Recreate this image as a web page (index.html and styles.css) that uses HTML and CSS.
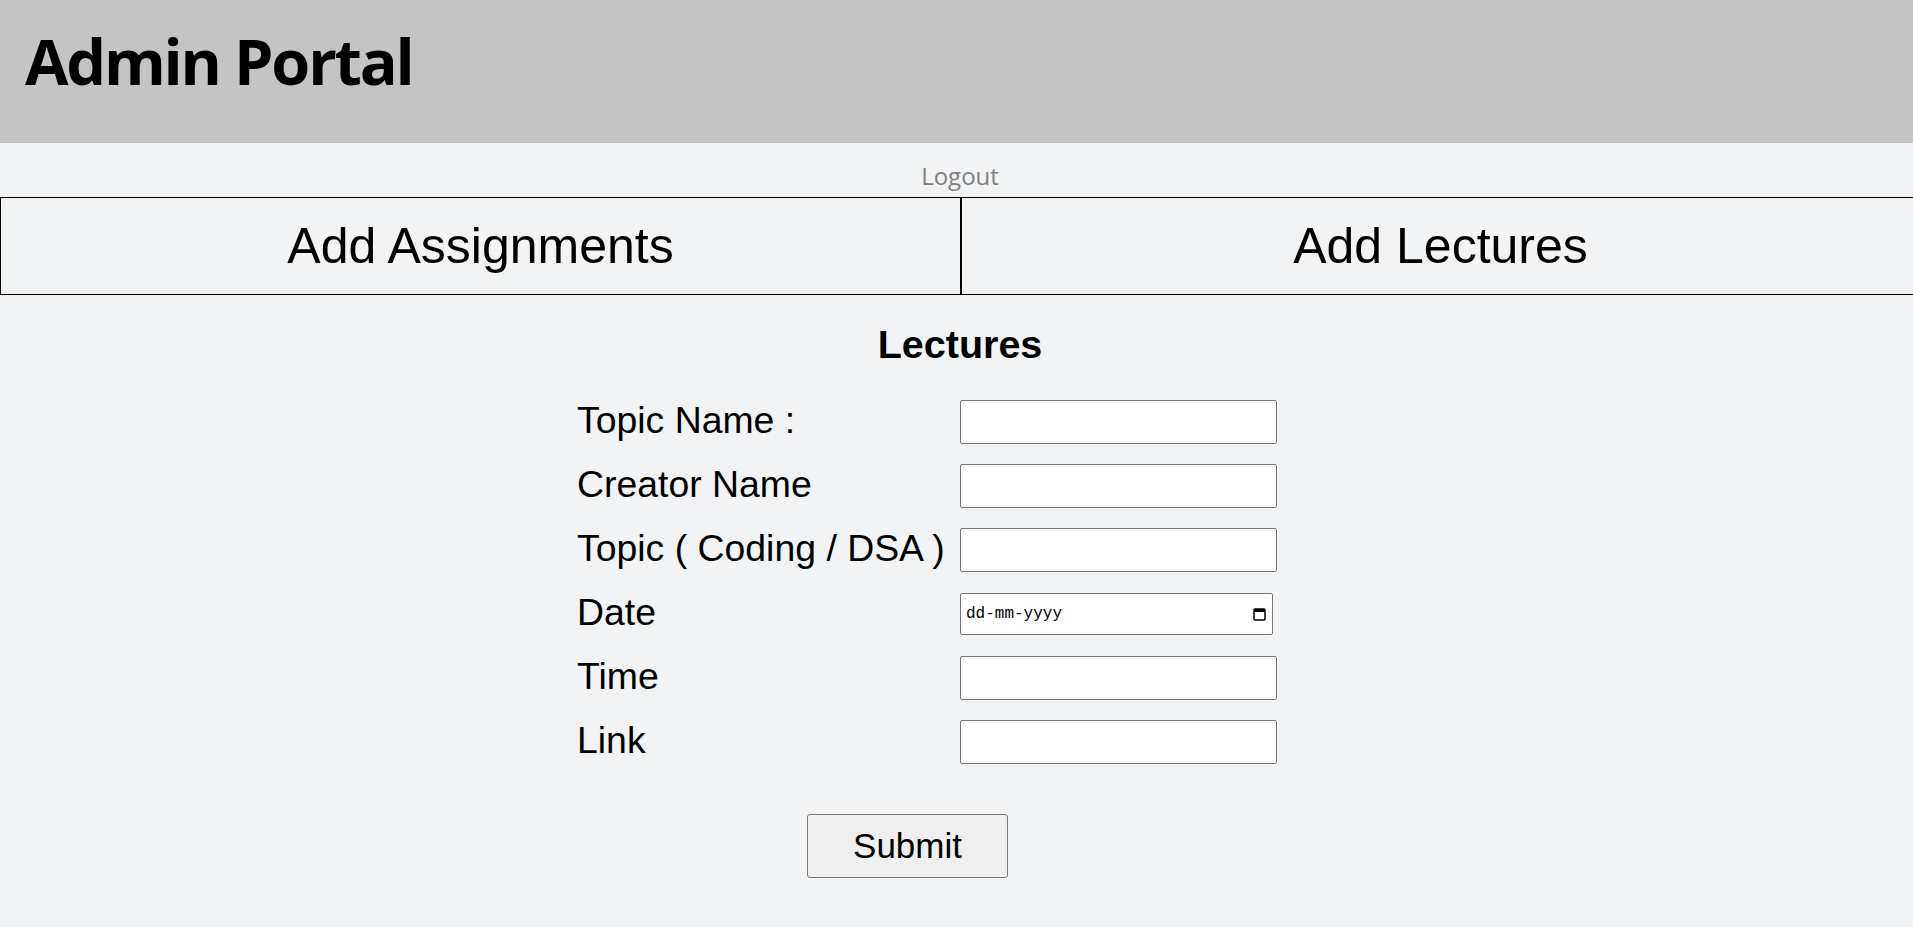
FILE: index.html
```html
<!DOCTYPE html>
<html lang="en">
<head>
<meta charset="utf-8">
<title>Admin Portal</title>
<link rel="stylesheet" href="styles.css">
</head>
<body>
<div class="page">
  <header class="topbar">
    <h1 class="brand">Admin Portal</h1>
  </header>
  <nav class="logout-row">
    <a class="logout" href="#">Logout</a>
  </nav>
  <div class="tabs">
    <div class="tab">Add Assignments</div>
    <div class="tab">Add Lectures</div>
  </div>
  <main class="panel">
    <h2 class="panel-title">Lectures</h2>
    <form class="lecture-form">
      <div class="fields">
        <label class="field-label">Topic Name :</label>
        <input class="field-input" type="text">
        <label class="field-label">Creator Name</label>
        <input class="field-input" type="text">
        <label class="field-label">Topic ( Coding / DSA )</label>
        <input class="field-input" type="text">
        <label class="field-label">Date</label>
        <div class="date-input">
          <span class="date-text">dd-mm-yyyy</span>
          <svg class="cal-icon" width="13" height="13" viewBox="0 0 13 13" aria-hidden="true">
            <rect x="1" y="1" width="11" height="11" rx="1" fill="none" stroke="#000" stroke-width="1.5"/>
            <rect x="1" y="1" width="11" height="3" fill="#000"/>
          </svg>
        </div>
        <label class="field-label">Time</label>
        <input class="field-input" type="text">
        <label class="field-label">Link</label>
        <input class="field-input" type="text">
      </div>
      <div class="actions">
        <button class="submit" type="button">Submit</button>
      </div>
    </form>
  </main>
</div>
</body>
</html>
```

FILE: styles.css
```css
* {
  box-sizing: border-box;
}

html, body {
  margin: 0;
  padding: 0;
}

body {
  background: #f2f3f5;
  font-family: "Liberation Sans", Arial, sans-serif;
  color: #000;
  overflow-x: hidden;
}

.page {
  width: 1920px;
}

.topbar {
  background: #c4c4c4;
  height: 143px;
  padding: 17px 25px 0;
}

.brand {
  margin: 0;
  font-family: "Open Sans", "Noto Sans", sans-serif;
  font-weight: 700;
  font-size: 63px;
  line-height: 87px;
  letter-spacing: -2.2px;
}

.logout-row {
  display: flex;
  justify-content: center;
  padding: 17px 0 5px;
}

.logout {
  font-family: "Open Sans", "Noto Sans", sans-serif;
  font-size: 24px;
  line-height: 32px;
  color: #808080;
  text-decoration: none;
}

.tabs {
  display: grid;
  grid-template-columns: 961px 1fr;
}

.tab {
  border: 1px solid #000;
  height: 98px;
  font-size: 50px;
  line-height: 96px;
  text-align: center;
  white-space: nowrap;
}

.panel {
  padding-top: 27px;
}

.panel-title {
  margin: 0 0 33px;
  text-align: center;
  font-size: 39.5px;
  line-height: 45px;
  font-weight: 700;
}

.lecture-form {
  width: 700px;
  margin: 0 auto;
  padding-right: 66px;
  box-sizing: content-box;
}

.fields {
  display: grid;
  grid-template-columns: 383px 317px;
  grid-auto-rows: 44px;
  row-gap: 20px;
  align-items: start;
}

.field-label {
  font-size: 37.4px;
  line-height: 41px;
  white-space: nowrap;
}

.field-input {
  width: 317px;
  height: 44px;
  margin: 0;
  border: 1px solid #767676;
  border-radius: 2px;
  background: #fff;
  padding: 0 4px;
  font-size: 20px;
}

.date-input {
  align-self: center;
  width: 313px;
  height: 42px;
  border: 1px solid #767676;
  border-radius: 2px;
  background: #fff;
  display: flex;
  align-items: center;
  justify-content: space-between;
  padding: 0 6px 0 5px;
}

.date-text {
  font-family: "Liberation Mono", "DejaVu Sans Mono", monospace;
  font-size: 16px;
  color: #000;
}

.cal-icon {
  display: block;
}

.actions {
  display: flex;
  padding: 50px 0 0 230px;
}

.submit {
  width: 201px;
  height: 64px;
  background: #efefef;
  border: 1px solid #767676;
  border-radius: 3px;
  font-family: "Liberation Sans", Arial, sans-serif;
  font-size: 35px;
  color: #000;
  padding: 0;
}
```
